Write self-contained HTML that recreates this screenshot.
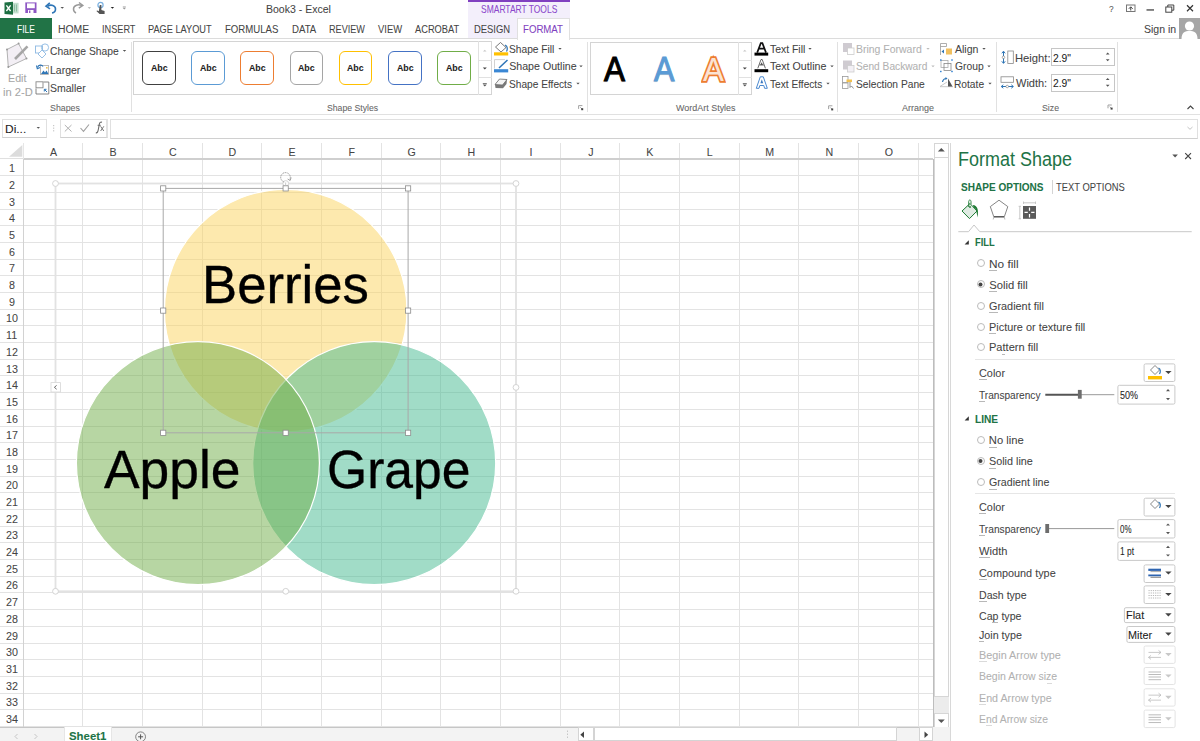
<!DOCTYPE html>
<html><head><meta charset="utf-8"><style>
html,body{margin:0;padding:0;}
body{width:1200px;height:741px;position:relative;overflow:hidden;background:#fff;font-family:"Liberation Sans",sans-serif;}
.t{position:absolute;white-space:nowrap;line-height:normal;transform-origin:0 0;-webkit-text-stroke:0.06px currentColor;}
svg{overflow:visible}
</style></head><body>
<div class="t" style="left:265.86px;top:3.39px;font-size:10.93px;color:#444444;transform:scaleX(0.962);">Book3 - Excel</div>
<div class="t" style="left:1109.47px;top:3.08px;font-size:9.62px;color:#555;transform:scaleX(0.866);">?</div>
<div style="position:absolute;left:468px;top:0px;width:102px;height:38px;background:#f3effb"></div>
<div style="position:absolute;left:468px;top:0px;width:102px;height:1.6px;background:#8040c0"></div>
<div class="t" style="left:481.02px;top:4.29px;font-size:10.06px;color:#8b48cc;transform:scaleX(0.844);">SMARTART TOOLS</div>
<div style="position:absolute;left:517px;top:18px;width:53px;height:21px;background:#fff;border:1px solid #e0e0e0;border-bottom:none;box-sizing:border-box;height:22px"></div>
<div style="position:absolute;left:0px;top:38px;width:517px;height:1px;background:#dcdcdc"></div>
<div style="position:absolute;left:570px;top:38px;width:630px;height:1px;background:#dcdcdc"></div>
<div style="position:absolute;left:0px;top:18px;width:52px;height:21px;background:#217346"></div>
<div class="t" style="left:16.52px;top:22.73px;font-size:10.79px;color:#fff;transform:scaleX(0.783);">FILE</div>
<div class="t" style="left:58.17px;top:22.73px;font-size:10.79px;color:#444444;transform:scaleX(0.966);">HOME</div>
<div class="t" style="left:101.67px;top:22.73px;font-size:10.79px;color:#444444;transform:scaleX(0.851);">INSERT</div>
<div class="t" style="left:148.26px;top:22.73px;font-size:10.79px;color:#444444;transform:scaleX(0.854);">PAGE LAYOUT</div>
<div class="t" style="left:225.03px;top:22.73px;font-size:10.79px;color:#444444;transform:scaleX(0.891);">FORMULAS</div>
<div class="t" style="left:291.73px;top:22.73px;font-size:10.79px;color:#444444;transform:scaleX(0.895);">DATA</div>
<div class="t" style="left:329.02px;top:22.73px;font-size:10.79px;color:#444444;transform:scaleX(0.844);">REVIEW</div>
<div class="t" style="left:377.95px;top:22.73px;font-size:10.79px;color:#444444;transform:scaleX(0.874);">VIEW</div>
<div class="t" style="left:415.00px;top:22.73px;font-size:10.79px;color:#444444;transform:scaleX(0.861);">ACROBAT</div>
<div class="t" style="left:474.25px;top:22.73px;font-size:10.79px;color:#444444;transform:scaleX(0.874);">DESIGN</div>
<div class="t" style="left:522.93px;top:22.73px;font-size:10.79px;color:#8040c0;transform:scaleX(0.894);">FORMAT</div>
<div class="t" style="left:1143.53px;top:22.86px;font-size:10.64px;color:#444444;transform:scaleX(0.989);">Sign in</div>
<div style="position:absolute;left:1179px;top:18px;width:21px;height:21px;background:#a6a6a6;overflow:hidden"></div>
<div style="position:absolute;left:0px;top:114px;width:1200px;height:1px;background:#e1e1e1"></div>
<div style="position:absolute;left:131px;top:42px;width:1px;height:70px;background:#e1e1e1"></div>
<div style="position:absolute;left:587px;top:42px;width:1px;height:70px;background:#e1e1e1"></div>
<div style="position:absolute;left:837px;top:42px;width:1px;height:70px;background:#e1e1e1"></div>
<div style="position:absolute;left:996px;top:42px;width:1px;height:70px;background:#e1e1e1"></div>
<div style="position:absolute;left:1117px;top:42px;width:1px;height:70px;background:#e1e1e1"></div>
<div class="t" style="left:50.35px;top:102.08px;font-size:9.62px;color:#666;transform:scaleX(0.918);">Shapes</div>
<div class="t" style="left:327.11px;top:102.08px;font-size:9.62px;color:#666;transform:scaleX(0.903);">Shape Styles</div>
<div class="t" style="left:676.46px;top:102.08px;font-size:9.62px;color:#666;transform:scaleX(0.932);">WordArt Styles</div>
<div class="t" style="left:901.70px;top:102.08px;font-size:9.62px;color:#666;transform:scaleX(0.936);">Arrange</div>
<div class="t" style="left:1041.61px;top:102.08px;font-size:9.62px;color:#666;transform:scaleX(0.911);">Size</div>
<div class="t" style="left:8.44px;top:72.49px;font-size:10.50px;color:#a6a6a6;transform:scaleX(1.020);">Edit</div>
<div class="t" style="left:2.77px;top:86.49px;font-size:10.50px;color:#a6a6a6;transform:scaleX(1.063);">in 2-D</div>
<div class="t" style="left:50.24px;top:44.66px;font-size:11.08px;color:#444444;transform:scaleX(0.929);">Change Shape</div>
<div class="t" style="left:49.91px;top:63.76px;font-size:11.08px;color:#444444;transform:scaleX(0.945);">Larger</div>
<div class="t" style="left:50.28px;top:82.46px;font-size:11.08px;color:#444444;transform:scaleX(0.949);">Smaller</div>
<div style="position:absolute;left:133px;top:41px;width:359px;height:54px;border:1px solid #d4d4d4;box-sizing:border-box"></div>
<div style="position:absolute;left:478px;top:41px;width:1px;height:54px;background:#e1e1e1"></div>
<div style="position:absolute;left:478px;top:60px;width:14px;height:1px;background:#e1e1e1"></div>
<div style="position:absolute;left:478px;top:77px;width:14px;height:1px;background:#e1e1e1"></div>
<div style="position:absolute;left:142.0px;top:51.3px;width:33.5px;height:33.5px;border:1.5px solid #404040;border-radius:6px;box-sizing:border-box"></div>
<div class="t" style="left:150.58px;top:61.82px;font-size:9.48px;color:#222;font-weight:bold;transform:scaleX(0.932);">Abc</div>
<div style="position:absolute;left:191.2px;top:51.3px;width:33.5px;height:33.5px;border:1.5px solid #5b9bd5;border-radius:6px;box-sizing:border-box"></div>
<div class="t" style="left:199.78px;top:61.82px;font-size:9.48px;color:#222;font-weight:bold;transform:scaleX(0.932);">Abc</div>
<div style="position:absolute;left:240.4px;top:51.3px;width:33.5px;height:33.5px;border:1.5px solid #ed7d31;border-radius:6px;box-sizing:border-box"></div>
<div class="t" style="left:248.98px;top:61.82px;font-size:9.48px;color:#222;font-weight:bold;transform:scaleX(0.932);">Abc</div>
<div style="position:absolute;left:289.6px;top:51.3px;width:33.5px;height:33.5px;border:1.5px solid #a5a5a5;border-radius:6px;box-sizing:border-box"></div>
<div class="t" style="left:298.18px;top:61.82px;font-size:9.48px;color:#222;font-weight:bold;transform:scaleX(0.932);">Abc</div>
<div style="position:absolute;left:338.8px;top:51.3px;width:33.5px;height:33.5px;border:1.5px solid #ffc000;border-radius:6px;box-sizing:border-box"></div>
<div class="t" style="left:347.38px;top:61.82px;font-size:9.48px;color:#222;font-weight:bold;transform:scaleX(0.932);">Abc</div>
<div style="position:absolute;left:388.0px;top:51.3px;width:33.5px;height:33.5px;border:1.5px solid #4472c4;border-radius:6px;box-sizing:border-box"></div>
<div class="t" style="left:396.58px;top:61.82px;font-size:9.48px;color:#222;font-weight:bold;transform:scaleX(0.932);">Abc</div>
<div style="position:absolute;left:437.2px;top:51.3px;width:33.5px;height:33.5px;border:1.5px solid #70ad47;border-radius:6px;box-sizing:border-box"></div>
<div class="t" style="left:445.78px;top:61.82px;font-size:9.48px;color:#222;font-weight:bold;transform:scaleX(0.932);">Abc</div>
<div class="t" style="left:509.24px;top:43.16px;font-size:10.64px;color:#444444;transform:scaleX(0.960);">Shape Fill</div>
<div class="t" style="left:509.22px;top:60.36px;font-size:10.64px;color:#444444;">Shape Outline</div>
<div class="t" style="left:509.24px;top:77.86px;font-size:10.64px;color:#444444;transform:scaleX(0.955);">Shape Effects</div>
<div style="position:absolute;left:590px;top:41.5px;width:162px;height:53px;border:1px solid #d4d4d4;box-sizing:border-box"></div>
<div style="position:absolute;left:738px;top:41.5px;width:1px;height:53px;background:#e1e1e1"></div>
<div style="position:absolute;left:738px;top:60px;width:14px;height:1px;background:#e1e1e1"></div>
<div style="position:absolute;left:738px;top:77px;width:14px;height:1px;background:#e1e1e1"></div>
<div class="t" style="left:603.80px;top:49.77px;font-size:34.69px;color:#000;transform:scaleX(0.906);-webkit-text-stroke:1.1px #000;text-shadow:0 1px 1px rgba(0,0,0,0.25)">A</div>
<div class="t" style="left:654.00px;top:49.77px;font-size:34.69px;color:#5b9bd5;transform:scaleX(0.880);-webkit-text-stroke:1.1px #5b9bd5;text-shadow:0 1px 1px rgba(0,0,0,0.2)">A</div>
<div class="t" style="left:703.00px;top:49.90px;font-size:34.11px;color:#fbe3d3;transform:scaleX(0.917);-webkit-text-stroke:3.6px #ed7d31;paint-order:stroke fill">A</div>
<div class="t" style="left:769.99px;top:43.16px;font-size:10.64px;color:#444444;transform:scaleX(0.980);">Text Fill</div>
<div class="t" style="left:769.99px;top:60.36px;font-size:10.64px;color:#444444;transform:scaleX(1.005);">Text Outline</div>
<div class="t" style="left:770.00px;top:77.86px;font-size:10.64px;color:#444444;transform:scaleX(0.955);">Text Effects</div>
<div class="t" style="left:855.86px;top:43.16px;font-size:10.64px;color:#b1b1b1;transform:scaleX(0.985);">Bring Forward</div>
<div class="t" style="left:856.24px;top:60.36px;font-size:10.64px;color:#b1b1b1;transform:scaleX(0.958);">Send Backward</div>
<div class="t" style="left:856.24px;top:77.86px;font-size:10.64px;color:#444444;transform:scaleX(0.962);">Selection Pane</div>
<div class="t" style="left:955.20px;top:43.16px;font-size:10.64px;color:#444444;transform:scaleX(0.992);">Align</div>
<div class="t" style="left:954.68px;top:60.36px;font-size:10.64px;color:#444444;transform:scaleX(0.971);">Group</div>
<div class="t" style="left:954.38px;top:77.86px;font-size:10.64px;color:#444444;transform:scaleX(0.960);">Rotate</div>
<div class="t" style="left:1015.00px;top:51.86px;font-size:11.08px;color:#444444;transform:scaleX(1.013);">Height:</div>
<div class="t" style="left:1015.84px;top:76.66px;font-size:11.08px;color:#444444;transform:scaleX(0.993);">Width:</div>
<div style="position:absolute;left:1051px;top:48px;width:64px;height:18px;border:1px solid #c6c6c6;box-sizing:border-box;background:#fff"></div>
<div style="position:absolute;left:1051px;top:73.5px;width:64px;height:18px;border:1px solid #c6c6c6;box-sizing:border-box;background:#fff"></div>
<div class="t" style="left:1052.88px;top:51.86px;font-size:10.64px;color:#222;transform:scaleX(0.971);">2.9"</div>
<div class="t" style="left:1052.88px;top:77.36px;font-size:10.64px;color:#222;transform:scaleX(0.971);">2.9"</div>
<div style="position:absolute;left:2px;top:119px;width:45px;height:19px;border:1px solid #e0e0e0;border-bottom-color:#d0d0d0;box-sizing:border-box"></div>
<div class="t" style="left:4.84px;top:122.59px;font-size:10.93px;color:#222;transform:scaleX(1.094);">Di...</div>
<div style="position:absolute;left:60px;top:119px;width:48px;height:19px;border:1px solid #e0e0e0;border-bottom-color:#d0d0d0;border-right:2px solid #e3e3e3;box-sizing:border-box"></div>
<div style="position:absolute;left:110px;top:119px;width:1088px;height:19.5px;border:1px solid #e0e0e0;border-bottom-color:#d0d0d0;box-sizing:border-box"></div>
<div style="position:absolute;left:23px;top:175.19px;width:910px;height:1px;background:#e3e3e3"></div>
<div style="position:absolute;left:0px;top:175.19px;width:23px;height:1px;background:#e3e3e3"></div>
<div style="position:absolute;left:23px;top:191.88px;width:910px;height:1px;background:#e3e3e3"></div>
<div style="position:absolute;left:0px;top:191.88px;width:23px;height:1px;background:#e3e3e3"></div>
<div style="position:absolute;left:23px;top:208.57px;width:910px;height:1px;background:#e3e3e3"></div>
<div style="position:absolute;left:0px;top:208.57px;width:23px;height:1px;background:#e3e3e3"></div>
<div style="position:absolute;left:23px;top:225.26px;width:910px;height:1px;background:#e3e3e3"></div>
<div style="position:absolute;left:0px;top:225.26px;width:23px;height:1px;background:#e3e3e3"></div>
<div style="position:absolute;left:23px;top:241.95px;width:910px;height:1px;background:#e3e3e3"></div>
<div style="position:absolute;left:0px;top:241.95px;width:23px;height:1px;background:#e3e3e3"></div>
<div style="position:absolute;left:23px;top:258.64px;width:910px;height:1px;background:#e3e3e3"></div>
<div style="position:absolute;left:0px;top:258.64px;width:23px;height:1px;background:#e3e3e3"></div>
<div style="position:absolute;left:23px;top:275.33px;width:910px;height:1px;background:#e3e3e3"></div>
<div style="position:absolute;left:0px;top:275.33px;width:23px;height:1px;background:#e3e3e3"></div>
<div style="position:absolute;left:23px;top:292.02px;width:910px;height:1px;background:#e3e3e3"></div>
<div style="position:absolute;left:0px;top:292.02px;width:23px;height:1px;background:#e3e3e3"></div>
<div style="position:absolute;left:23px;top:308.71px;width:910px;height:1px;background:#e3e3e3"></div>
<div style="position:absolute;left:0px;top:308.71px;width:23px;height:1px;background:#e3e3e3"></div>
<div style="position:absolute;left:23px;top:325.4px;width:910px;height:1px;background:#e3e3e3"></div>
<div style="position:absolute;left:0px;top:325.4px;width:23px;height:1px;background:#e3e3e3"></div>
<div style="position:absolute;left:23px;top:342.09px;width:910px;height:1px;background:#e3e3e3"></div>
<div style="position:absolute;left:0px;top:342.09px;width:23px;height:1px;background:#e3e3e3"></div>
<div style="position:absolute;left:23px;top:358.78px;width:910px;height:1px;background:#e3e3e3"></div>
<div style="position:absolute;left:0px;top:358.78px;width:23px;height:1px;background:#e3e3e3"></div>
<div style="position:absolute;left:23px;top:375.47px;width:910px;height:1px;background:#e3e3e3"></div>
<div style="position:absolute;left:0px;top:375.47px;width:23px;height:1px;background:#e3e3e3"></div>
<div style="position:absolute;left:23px;top:392.16px;width:910px;height:1px;background:#e3e3e3"></div>
<div style="position:absolute;left:0px;top:392.16px;width:23px;height:1px;background:#e3e3e3"></div>
<div style="position:absolute;left:23px;top:408.85px;width:910px;height:1px;background:#e3e3e3"></div>
<div style="position:absolute;left:0px;top:408.85px;width:23px;height:1px;background:#e3e3e3"></div>
<div style="position:absolute;left:23px;top:425.54px;width:910px;height:1px;background:#e3e3e3"></div>
<div style="position:absolute;left:0px;top:425.54px;width:23px;height:1px;background:#e3e3e3"></div>
<div style="position:absolute;left:23px;top:442.23px;width:910px;height:1px;background:#e3e3e3"></div>
<div style="position:absolute;left:0px;top:442.23px;width:23px;height:1px;background:#e3e3e3"></div>
<div style="position:absolute;left:23px;top:458.92px;width:910px;height:1px;background:#e3e3e3"></div>
<div style="position:absolute;left:0px;top:458.92px;width:23px;height:1px;background:#e3e3e3"></div>
<div style="position:absolute;left:23px;top:475.61px;width:910px;height:1px;background:#e3e3e3"></div>
<div style="position:absolute;left:0px;top:475.61px;width:23px;height:1px;background:#e3e3e3"></div>
<div style="position:absolute;left:23px;top:492.3px;width:910px;height:1px;background:#e3e3e3"></div>
<div style="position:absolute;left:0px;top:492.3px;width:23px;height:1px;background:#e3e3e3"></div>
<div style="position:absolute;left:23px;top:508.99px;width:910px;height:1px;background:#e3e3e3"></div>
<div style="position:absolute;left:0px;top:508.99px;width:23px;height:1px;background:#e3e3e3"></div>
<div style="position:absolute;left:23px;top:525.68px;width:910px;height:1px;background:#e3e3e3"></div>
<div style="position:absolute;left:0px;top:525.68px;width:23px;height:1px;background:#e3e3e3"></div>
<div style="position:absolute;left:23px;top:542.37px;width:910px;height:1px;background:#e3e3e3"></div>
<div style="position:absolute;left:0px;top:542.37px;width:23px;height:1px;background:#e3e3e3"></div>
<div style="position:absolute;left:23px;top:559.06px;width:910px;height:1px;background:#e3e3e3"></div>
<div style="position:absolute;left:0px;top:559.06px;width:23px;height:1px;background:#e3e3e3"></div>
<div style="position:absolute;left:23px;top:575.75px;width:910px;height:1px;background:#e3e3e3"></div>
<div style="position:absolute;left:0px;top:575.75px;width:23px;height:1px;background:#e3e3e3"></div>
<div style="position:absolute;left:23px;top:592.44px;width:910px;height:1px;background:#e3e3e3"></div>
<div style="position:absolute;left:0px;top:592.44px;width:23px;height:1px;background:#e3e3e3"></div>
<div style="position:absolute;left:23px;top:609.13px;width:910px;height:1px;background:#e3e3e3"></div>
<div style="position:absolute;left:0px;top:609.13px;width:23px;height:1px;background:#e3e3e3"></div>
<div style="position:absolute;left:23px;top:625.82px;width:910px;height:1px;background:#e3e3e3"></div>
<div style="position:absolute;left:0px;top:625.82px;width:23px;height:1px;background:#e3e3e3"></div>
<div style="position:absolute;left:23px;top:642.51px;width:910px;height:1px;background:#e3e3e3"></div>
<div style="position:absolute;left:0px;top:642.51px;width:23px;height:1px;background:#e3e3e3"></div>
<div style="position:absolute;left:23px;top:659.2px;width:910px;height:1px;background:#e3e3e3"></div>
<div style="position:absolute;left:0px;top:659.2px;width:23px;height:1px;background:#e3e3e3"></div>
<div style="position:absolute;left:23px;top:675.89px;width:910px;height:1px;background:#e3e3e3"></div>
<div style="position:absolute;left:0px;top:675.89px;width:23px;height:1px;background:#e3e3e3"></div>
<div style="position:absolute;left:23px;top:692.58px;width:910px;height:1px;background:#e3e3e3"></div>
<div style="position:absolute;left:0px;top:692.58px;width:23px;height:1px;background:#e3e3e3"></div>
<div style="position:absolute;left:23px;top:709.27px;width:910px;height:1px;background:#e3e3e3"></div>
<div style="position:absolute;left:0px;top:709.27px;width:23px;height:1px;background:#e3e3e3"></div>
<div style="position:absolute;left:23px;top:725.96px;width:910px;height:1px;background:#e3e3e3"></div>
<div style="position:absolute;left:0px;top:725.96px;width:23px;height:1px;background:#e3e3e3"></div>
<div style="position:absolute;left:82.17px;top:143px;width:1px;height:584px;background:#e3e3e3"></div>
<div style="position:absolute;left:141.84px;top:143px;width:1px;height:584px;background:#e3e3e3"></div>
<div style="position:absolute;left:201.51px;top:143px;width:1px;height:584px;background:#e3e3e3"></div>
<div style="position:absolute;left:261.18px;top:143px;width:1px;height:584px;background:#e3e3e3"></div>
<div style="position:absolute;left:320.85px;top:143px;width:1px;height:584px;background:#e3e3e3"></div>
<div style="position:absolute;left:380.52px;top:143px;width:1px;height:584px;background:#e3e3e3"></div>
<div style="position:absolute;left:440.19px;top:143px;width:1px;height:584px;background:#e3e3e3"></div>
<div style="position:absolute;left:499.86px;top:143px;width:1px;height:584px;background:#e3e3e3"></div>
<div style="position:absolute;left:559.53px;top:143px;width:1px;height:584px;background:#e3e3e3"></div>
<div style="position:absolute;left:619.2px;top:143px;width:1px;height:584px;background:#e3e3e3"></div>
<div style="position:absolute;left:678.87px;top:143px;width:1px;height:584px;background:#e3e3e3"></div>
<div style="position:absolute;left:738.54px;top:143px;width:1px;height:584px;background:#e3e3e3"></div>
<div style="position:absolute;left:798.21px;top:143px;width:1px;height:584px;background:#e3e3e3"></div>
<div style="position:absolute;left:857.88px;top:143px;width:1px;height:584px;background:#e3e3e3"></div>
<div style="position:absolute;left:917.55px;top:143px;width:1px;height:584px;background:#e3e3e3"></div>
<div style="position:absolute;left:23px;top:158.4px;width:910px;height:1.3px;background:#cfcfcf"></div>
<div style="position:absolute;left:0px;top:158.2px;width:23px;height:1px;background:#e0e0e0"></div>
<div style="position:absolute;left:22.5px;top:159px;width:1px;height:568px;background:#d2d2d2"></div>
<div style="position:absolute;left:22.5px;top:143px;width:1px;height:16px;background:#e6e6e6"></div>
<div class="t" style="left:50.00px;top:145.66px;font-size:10.64px;color:#444444;">A</div>
<div class="t" style="left:109.51px;top:145.66px;font-size:10.64px;color:#444444;">B</div>
<div class="t" style="left:168.96px;top:145.66px;font-size:10.64px;color:#444444;">C</div>
<div class="t" style="left:228.53px;top:145.66px;font-size:10.64px;color:#444444;">D</div>
<div class="t" style="left:288.46px;top:145.66px;font-size:10.64px;color:#444444;">E</div>
<div class="t" style="left:348.43px;top:145.66px;font-size:10.64px;color:#444444;">F</div>
<div class="t" style="left:407.54px;top:145.66px;font-size:10.64px;color:#444444;">G</div>
<div class="t" style="left:467.39px;top:145.66px;font-size:10.64px;color:#444444;">H</div>
<div class="t" style="left:529.43px;top:145.66px;font-size:10.64px;color:#444444;">I</div>
<div class="t" style="left:588.22px;top:145.66px;font-size:10.64px;color:#444444;">J</div>
<div class="t" style="left:646.32px;top:145.66px;font-size:10.64px;color:#444444;">K</div>
<div class="t" style="left:706.69px;top:145.66px;font-size:10.64px;color:#444444;">L</div>
<div class="t" style="left:765.16px;top:145.66px;font-size:10.64px;color:#444444;">M</div>
<div class="t" style="left:825.41px;top:145.66px;font-size:10.64px;color:#444444;">N</div>
<div class="t" style="left:884.79px;top:145.66px;font-size:10.64px;color:#444444;">O</div>
<div class="t" style="left:8.66px;top:161.23px;font-size:11.66px;color:#444444;transform:scaleX(0.920);">1</div>
<div class="t" style="left:8.82px;top:177.92px;font-size:11.66px;color:#444444;transform:scaleX(0.920);">2</div>
<div class="t" style="left:8.82px;top:194.61px;font-size:11.66px;color:#444444;transform:scaleX(0.920);">3</div>
<div class="t" style="left:8.88px;top:211.30px;font-size:11.66px;color:#444444;transform:scaleX(0.920);">4</div>
<div class="t" style="left:8.82px;top:227.99px;font-size:11.66px;color:#444444;transform:scaleX(0.920);">5</div>
<div class="t" style="left:8.77px;top:244.68px;font-size:11.66px;color:#444444;transform:scaleX(0.920);">6</div>
<div class="t" style="left:8.82px;top:261.37px;font-size:11.66px;color:#444444;transform:scaleX(0.920);">7</div>
<div class="t" style="left:8.80px;top:278.06px;font-size:11.66px;color:#444444;transform:scaleX(0.920);">8</div>
<div class="t" style="left:8.82px;top:294.75px;font-size:11.66px;color:#444444;transform:scaleX(0.920);">9</div>
<div class="t" style="left:5.63px;top:311.44px;font-size:11.66px;color:#444444;transform:scaleX(0.920);">10</div>
<div class="t" style="left:6.09px;top:328.13px;font-size:11.66px;color:#444444;transform:scaleX(0.920);">11</div>
<div class="t" style="left:5.71px;top:344.82px;font-size:11.66px;color:#444444;transform:scaleX(0.920);">12</div>
<div class="t" style="left:5.66px;top:361.51px;font-size:11.66px;color:#444444;transform:scaleX(0.920);">13</div>
<div class="t" style="left:5.60px;top:378.20px;font-size:11.66px;color:#444444;transform:scaleX(0.920);">14</div>
<div class="t" style="left:5.66px;top:394.89px;font-size:11.66px;color:#444444;transform:scaleX(0.920);">15</div>
<div class="t" style="left:5.66px;top:411.58px;font-size:11.66px;color:#444444;transform:scaleX(0.920);">16</div>
<div class="t" style="left:5.71px;top:428.27px;font-size:11.66px;color:#444444;transform:scaleX(0.920);">17</div>
<div class="t" style="left:5.66px;top:444.96px;font-size:11.66px;color:#444444;transform:scaleX(0.920);">18</div>
<div class="t" style="left:5.68px;top:461.65px;font-size:11.66px;color:#444444;transform:scaleX(0.920);">19</div>
<div class="t" style="left:5.77px;top:478.34px;font-size:11.66px;color:#444444;transform:scaleX(0.920);">20</div>
<div class="t" style="left:5.82px;top:495.03px;font-size:11.66px;color:#444444;transform:scaleX(0.920);">21</div>
<div class="t" style="left:5.85px;top:511.72px;font-size:11.66px;color:#444444;transform:scaleX(0.920);">22</div>
<div class="t" style="left:5.79px;top:528.41px;font-size:11.66px;color:#444444;transform:scaleX(0.920);">23</div>
<div class="t" style="left:5.74px;top:545.10px;font-size:11.66px;color:#444444;transform:scaleX(0.920);">24</div>
<div class="t" style="left:5.79px;top:561.79px;font-size:11.66px;color:#444444;transform:scaleX(0.920);">25</div>
<div class="t" style="left:5.79px;top:578.48px;font-size:11.66px;color:#444444;transform:scaleX(0.920);">26</div>
<div class="t" style="left:5.85px;top:595.17px;font-size:11.66px;color:#444444;transform:scaleX(0.920);">27</div>
<div class="t" style="left:5.79px;top:611.86px;font-size:11.66px;color:#444444;transform:scaleX(0.920);">28</div>
<div class="t" style="left:5.82px;top:628.55px;font-size:11.66px;color:#444444;transform:scaleX(0.920);">29</div>
<div class="t" style="left:5.82px;top:645.24px;font-size:11.66px;color:#444444;transform:scaleX(0.920);">30</div>
<div class="t" style="left:5.87px;top:661.93px;font-size:11.66px;color:#444444;transform:scaleX(0.920);">31</div>
<div class="t" style="left:5.90px;top:678.62px;font-size:11.66px;color:#444444;transform:scaleX(0.920);">32</div>
<div class="t" style="left:5.85px;top:695.31px;font-size:11.66px;color:#444444;transform:scaleX(0.920);">33</div>
<div class="t" style="left:5.79px;top:712.00px;font-size:11.66px;color:#444444;transform:scaleX(0.920);">34</div>
<div style="position:absolute;left:932.6px;top:159px;width:1px;height:568px;background:#bdbdbd"></div>
<div style="position:absolute;left:934px;top:157px;width:15px;height:556px;background:#fff"></div>
<div style="position:absolute;left:934px;top:697px;width:15px;height:16px;background:#ececec"></div>
<div style="position:absolute;left:934px;top:143px;width:15px;height:15px;background:#fff;border:1px solid #d6d6d6;box-sizing:border-box"></div>
<div style="position:absolute;left:934px;top:157px;width:15px;height:540px;background:#fff;border:1px solid #d6d6d6;box-sizing:border-box"></div>
<div style="position:absolute;left:934px;top:713px;width:15px;height:14.5px;background:#fff;border:1px solid #d6d6d6;box-sizing:border-box"></div>
<svg style="position:absolute;left:934px;top:143px" width="15" height="585" viewBox="0 0 15 585"><path d="M3.8 8.5 h7 l-3.5 -3.6z" fill="#555"/><path d="M3.8 576.5 h7 l-3.5 3.6z" fill="#555"/></svg>
<div style="position:absolute;left:950px;top:143px;width:1px;height:598px;background:#d8d8d8"></div>
<div style="position:absolute;left:0px;top:727px;width:950px;height:14px;background:#f3f3f3"></div>
<div style="position:absolute;left:0px;top:726.5px;width:933px;height:1px;background:#c6c6c6"></div>
<div style="position:absolute;left:64px;top:727px;width:48px;height:14px;background:#fff;border-left:1px solid #e6e6e6;border-right:1px solid #e6e6e6;box-sizing:border-box"></div>
<div class="t" style="left:68.66px;top:729.13px;font-size:11.66px;color:#217346;font-weight:bold;transform:scaleX(0.978);">Sheet1</div>
<div style="position:absolute;left:578px;top:727px;width:16px;height:14px;background:#fff;border:1px solid #d4d4d4;box-sizing:border-box"></div>
<div style="position:absolute;left:594px;top:727px;width:303px;height:14px;background:#fff;border:1px solid #d4d4d4;box-sizing:border-box"></div>
<div style="position:absolute;left:919px;top:727px;width:14px;height:14px;background:#fff;border:1px solid #d4d4d4;box-sizing:border-box"></div>
<svg style="position:absolute;left:0px;top:0px" width="1200" height="741" viewBox="0 0 1200 741">
<circle cx="285.7" cy="310.6" r="121.3" fill="rgba(251,211,93,0.5)" stroke="#fff" stroke-width="1.2"/>
<circle cx="374.2" cy="463.2" r="121.5" fill="rgba(67,185,143,0.5)" stroke="#fff" stroke-width="1.2"/>
<circle cx="197.9" cy="463.1" r="121.5" fill="rgba(111,173,71,0.5)" stroke="#fff" stroke-width="1.2"/>
</svg>
<div class="t" style="left:202.04px;top:253.79px;font-size:53.21px;color:#000;transform:scaleX(0.990);-webkit-text-stroke:0.35px #000">Berries</div>
<div class="t" style="left:103.50px;top:437.80px;font-size:54.08px;color:#000;transform:scaleX(0.987);-webkit-text-stroke:0.35px #000">Apple</div>
<div class="t" style="left:327.42px;top:438.17px;font-size:53.79px;color:#000;transform:scaleX(0.960);-webkit-text-stroke:0.35px #000">Grape</div>
<div class="t" style="left:957.96px;top:148.47px;font-size:20.12px;color:#217346;transform:scaleX(0.895);-webkit-text-stroke:0">Format Shape</div>
<div class="t" style="left:960.50px;top:180.83px;font-size:11.22px;color:#217346;font-weight:bold;transform:scaleX(0.895);">SHAPE OPTIONS</div>
<div style="position:absolute;left:1052px;top:180px;width:1px;height:14px;background:#d4d4d4"></div>
<div class="t" style="left:1055.61px;top:180.83px;font-size:11.22px;color:#444444;transform:scaleX(0.838);">TEXT OPTIONS</div>
<div class="t" style="left:974.79px;top:237.32px;font-size:10.35px;color:#217346;font-weight:bold;transform:scaleX(0.901);">FILL</div>
<div class="t" style="left:974.64px;top:413.62px;font-size:10.35px;color:#217346;font-weight:bold;transform:scaleX(0.982);">LINE</div>
<div class="t" style="left:988.75px;top:257.63px;font-size:11.22px;color:#444444;transform:scaleX(1.055);">No fill</div>
<div style="position:absolute;left:988.75px;top:270.00px;width:8.56px;height:1px;background:#b8b8b8"></div>
<div style="position:absolute;left:976.5px;top:259.4px;width:8px;height:8px;border:1px solid #bbb;border-radius:50%;box-sizing:border-box;background:#fff"></div>
<div class="t" style="left:989.20px;top:278.63px;font-size:11.22px;color:#444444;">Solid fill</div>
<div style="position:absolute;left:989.20px;top:291.00px;width:7.46px;height:1px;background:#b8b8b8"></div>
<div style="position:absolute;left:976.5px;top:280.4px;width:8px;height:8px;border:1px solid #bbb;border-radius:50%;box-sizing:border-box;background:#fff"></div>
<div class="t" style="left:989.16px;top:299.93px;font-size:11.22px;color:#444444;transform:scaleX(0.968);">Gradient fill</div>
<div style="position:absolute;left:989.16px;top:312.30px;width:8.46px;height:1px;background:#b8b8b8"></div>
<div style="position:absolute;left:976.5px;top:301.7px;width:8px;height:8px;border:1px solid #bbb;border-radius:50%;box-sizing:border-box;background:#fff"></div>
<div class="t" style="left:988.83px;top:320.73px;font-size:11.22px;color:#444444;transform:scaleX(0.971);">Picture or texture fill</div>
<div style="position:absolute;left:988.83px;top:333.10px;width:7.27px;height:1px;background:#b8b8b8"></div>
<div style="position:absolute;left:976.5px;top:322.5px;width:8px;height:8px;border:1px solid #bbb;border-radius:50%;box-sizing:border-box;background:#fff"></div>
<div class="t" style="left:988.82px;top:341.43px;font-size:11.22px;color:#444444;transform:scaleX(0.984);">Pattern fill</div>
<div style="position:absolute;left:1002.33px;top:353.80px;width:3.07px;height:1px;background:#b8b8b8"></div>
<div style="position:absolute;left:976.5px;top:343.2px;width:8px;height:8px;border:1px solid #bbb;border-radius:50%;box-sizing:border-box;background:#fff"></div>
<div style="position:absolute;left:975px;top:359px;width:200px;height:1px;background:#e6e6e6"></div>
<div class="t" style="left:988.80px;top:434.23px;font-size:11.22px;color:#444444;">No line</div>
<div style="position:absolute;left:988.80px;top:446.60px;width:8.13px;height:1px;background:#b8b8b8"></div>
<div style="position:absolute;left:976.5px;top:436px;width:8px;height:8px;border:1px solid #bbb;border-radius:50%;box-sizing:border-box;background:#fff"></div>
<div class="t" style="left:989.21px;top:455.23px;font-size:11.22px;color:#444444;transform:scaleX(0.962);">Solid line</div>
<div style="position:absolute;left:989.21px;top:467.60px;width:7.20px;height:1px;background:#b8b8b8"></div>
<div style="position:absolute;left:976.5px;top:457px;width:8px;height:8px;border:1px solid #bbb;border-radius:50%;box-sizing:border-box;background:#fff"></div>
<div class="t" style="left:989.17px;top:476.33px;font-size:11.22px;color:#444444;transform:scaleX(0.949);">Gradient line</div>
<div style="position:absolute;left:989.17px;top:488.70px;width:8.29px;height:1px;background:#b8b8b8"></div>
<div style="position:absolute;left:976.5px;top:478.1px;width:8px;height:8px;border:1px solid #bbb;border-radius:50%;box-sizing:border-box;background:#fff"></div>
<div style="position:absolute;left:975px;top:493px;width:200px;height:1px;background:#e6e6e6"></div>
<div class="t" style="left:978.65px;top:366.83px;font-size:11.22px;color:#444444;transform:scaleX(0.972);">Color</div>
<div style="position:absolute;left:978.65px;top:379.20px;width:7.88px;height:1px;background:#b8b8b8"></div>
<div class="t" style="left:979.00px;top:388.53px;font-size:11.22px;color:#444444;transform:scaleX(0.902);">Transparency</div>
<div style="position:absolute;left:979.00px;top:400.90px;width:6.18px;height:1px;background:#b8b8b8"></div>
<div class="t" style="left:978.66px;top:500.93px;font-size:11.22px;color:#444444;transform:scaleX(0.968);">Color</div>
<div style="position:absolute;left:978.66px;top:513.30px;width:7.84px;height:1px;background:#b8b8b8"></div>
<div class="t" style="left:979.00px;top:522.93px;font-size:11.22px;color:#444444;transform:scaleX(0.908);">Transparency</div>
<div style="position:absolute;left:979.00px;top:535.30px;width:6.22px;height:1px;background:#b8b8b8"></div>
<div class="t" style="left:979.14px;top:545.03px;font-size:11.22px;color:#444444;transform:scaleX(0.990);">Width</div>
<div style="position:absolute;left:979.14px;top:557.40px;width:10.48px;height:1px;background:#b8b8b8"></div>
<div class="t" style="left:978.66px;top:567.03px;font-size:11.22px;color:#444444;transform:scaleX(0.968);">Compound type</div>
<div style="position:absolute;left:978.66px;top:579.40px;width:7.85px;height:1px;background:#b8b8b8"></div>
<div class="t" style="left:979.35px;top:589.03px;font-size:11.22px;color:#444444;transform:scaleX(0.943);">Dash type</div>
<div style="position:absolute;left:979.35px;top:601.40px;width:7.64px;height:1px;background:#b8b8b8"></div>
<div class="t" style="left:978.67px;top:609.73px;font-size:11.22px;color:#444444;transform:scaleX(0.945);">Cap type</div>
<div style="position:absolute;left:992.22px;top:622.10px;width:5.90px;height:1px;background:#b8b8b8"></div>
<div class="t" style="left:979.04px;top:628.83px;font-size:11.22px;color:#444444;transform:scaleX(0.954);">Join type</div>
<div style="position:absolute;left:979.04px;top:641.20px;width:5.36px;height:1px;background:#b8b8b8"></div>
<div class="t" style="left:979.33px;top:648.83px;font-size:11.22px;color:#b1b1b1;transform:scaleX(0.965);">Begin Arrow type</div>
<div style="position:absolute;left:979.33px;top:661.20px;width:7.22px;height:1px;background:#dadada"></div>
<div class="t" style="left:979.36px;top:670.13px;font-size:11.22px;color:#b1b1b1;transform:scaleX(0.936);">Begin Arrow size</div>
<div style="position:absolute;left:1046.51px;top:682.50px;width:5.25px;height:1px;background:#dadada"></div>
<div class="t" style="left:979.34px;top:691.53px;font-size:11.22px;color:#b1b1b1;transform:scaleX(0.954);">End Arrow type</div>
<div style="position:absolute;left:979.34px;top:703.90px;width:7.15px;height:1px;background:#dadada"></div>
<div class="t" style="left:979.37px;top:713.03px;font-size:11.22px;color:#b1b1b1;transform:scaleX(0.923);">End Arrow size</div>
<div style="position:absolute;left:986.28px;top:725.40px;width:5.76px;height:1px;background:#dadada"></div>
<svg style="position:absolute;left:0px;top:0px" width="130" height="18" viewBox="0 0 130 18">
<path d="M4.5 2.6 L13 1.8 L13 14.8 L4.5 13.9 Z" fill="#1d6f42"/>
<rect x="13" y="2.8" width="5.6" height="10.6" fill="#c4dfcf"/>
<path d="M14.5 4.5v7M16.5 4.5v7" stroke="#7fb597" stroke-width="0.8"/>
<path d="M6.4 5.4 L10.6 11 M10.6 5.4 L6.4 11" stroke="#fff" stroke-width="1.4"/>
<path d="M25.3 2.4 H36.5 V13 H25.3 Z" fill="#8e57c4"/>
<rect x="27" y="3.4" width="7.8" height="4.8" fill="#fff"/>
<rect x="28" y="10" width="5.5" height="3" fill="#fff"/>
<rect x="29" y="10.5" width="1.4" height="2.5" fill="#8e57c4"/>
<path d="M47.5 6.3 C51 3.8 55.5 5.5 55.5 9 C55.5 11.5 53.5 12.8 52 13" fill="none" stroke="#2e75b6" stroke-width="1.6"/>
<path d="M49.8 2.8 L46 6.2 L50 8.8" fill="none" stroke="#2e75b6" stroke-width="1.6"/>
<path d="M60.5 7 h3.5 l-1.75 1.8z" fill="#555"/>
<path d="M82 5.8 C78.5 3.8 73.5 5.2 73.5 9 C73.5 11 75 12.5 76 13" fill="none" stroke="#999" stroke-width="1.5"/>
<path d="M79 2.5 L82.8 5.5 L78.8 8.2" fill="none" stroke="#999" stroke-width="1.5"/>
<path d="M87.7 7.2 h3.3 l-1.65 1.6z" fill="#aaa"/>
<circle cx="100.5" cy="5" r="2.6" fill="none" stroke="#7ab0e0" stroke-width="1.2"/>
<path d="M99.8 5 h1.6 v5 l3.2 1 v3 h-5 l-3.2 -3 l0.8 -0.6 l1.6 0.8 z" fill="#555"/>
<path d="M110.7 7 h3.4 l-1.7 1.7z" fill="#222"/>
<path d="M122.8 6.6 h3 v0.8 h-3z M122.8 8 h3 l-1.5 1.6z" fill="#999"/>
</svg>
<svg style="position:absolute;left:1100px;top:0px" width="100" height="18" viewBox="0 0 100 18">
<rect x="26.5" y="5" width="8.5" height="6.5" fill="none" stroke="#777" stroke-width="1"/>
<path d="M30.75 10.5 v-3.5 M28.8 8.8 l1.95-2 l1.95 2" fill="none" stroke="#444" stroke-width="1"/>
<rect x="46.5" y="9.3" width="7.5" height="1.3" fill="#444"/>
<rect x="65.8" y="7" width="6" height="5.2" fill="none" stroke="#444" stroke-width="1"/>
<path d="M67.8 7 v-2 h6 v5.2 h-2" fill="none" stroke="#444" stroke-width="1"/>
<path d="M87 5.3 L93 11.2 M93 5.3 L87 11.2" stroke="#333" stroke-width="1.2"/>
</svg>
<svg style="position:absolute;left:1179px;top:18px" width="21" height="21" viewBox="0 0 21 21">
<circle cx="10.5" cy="8" r="4.6" fill="#fff"/>
<path d="M2.5 21 C2.5 14.5 6 13 10.5 13 C15 13 18.5 14.5 18.5 21 Z" fill="#fff"/>
</svg>
<svg style="position:absolute;left:0px;top:0px" width="1200" height="120" viewBox="0 0 1200 120">
<!-- Edit in 2-D -->
<path d="M7 49.5 L18.6 43.6 L26.5 58.5 L8.3 67 Z" fill="#f3eff5" stroke="#aaa" stroke-width="0.9"/>
<circle cx="7" cy="49.5" r="1" fill="#999"/><circle cx="18.6" cy="43.6" r="1" fill="#999"/><circle cx="26.5" cy="58.5" r="1" fill="#999"/><circle cx="8.3" cy="67" r="1" fill="#999"/>
<path d="M15 59 L27.5 46.3" stroke="#a6a6a6" stroke-width="2.6"/>
<!-- Change shape -->
<rect x="35.5" y="46" width="7" height="7" fill="none" stroke="#8db9e2" stroke-width="0.9"/>
<circle cx="45" cy="47.5" r="3.6" fill="none" stroke="#8db9e2" stroke-width="0.9"/>
<path d="M42 50 L46 54 L42 58 L38 54 Z" fill="#fff" stroke="#8db9e2" stroke-width="0.9"/>
<!-- Larger -->
<rect x="40.5" y="65.5" width="8" height="9" fill="#fff" stroke="#aaa" stroke-width="0.8"/>
<path d="M41 74 L43.5 70.5 L45 72.5 L46.5 70.5 L48.5 74 Z" fill="#2e75b6"/>
<rect x="46" y="67" width="1.6" height="1.6" fill="#f2c14e"/>
<path d="M37.5 67.5 C38.5 64.5 42 64.5 43 66.5" fill="none" stroke="#2e75b6" stroke-width="1.1"/>
<path d="M36.5 65.5 L37.3 68.8 L40 67.5" fill="none" stroke="#2e75b6" stroke-width="1.1"/>
<!-- Smaller -->
<rect x="36" y="81.8" width="7" height="6" fill="none" stroke="#888" stroke-width="0.9"/>
<path d="M43.5 82 H48.8 V94 H36 V88.5" fill="none" stroke="#777" stroke-width="0.9"/>
<path d="M47 92 L44.5 89.5 M44.3 91.5 V89.3 H46.5" fill="none" stroke="#2e75b6" stroke-width="1"/>
<!-- Shape Fill -->
<path d="M500.5 42.5 L506 47.5 L501 52 L495.5 47 Z" fill="#fff" stroke="#555" stroke-width="0.8"/>
<path d="M505 45 C508 46 507.5 50 506.5 51.5" fill="none" stroke="#2e75b6" stroke-width="1.3"/>
<rect x="494" y="52.3" width="14.2" height="3.2" fill="#ffc000"/>
<!-- Shape Outline -->
<path d="M494.5 68.5 V59.6 H505" fill="none" stroke="#ccc" stroke-width="0.9"/>
<path d="M499 68 L507.5 60" stroke="#2e75b6" stroke-width="1.5"/>
<rect x="494" y="69.2" width="14.2" height="3.2" fill="#3a87d4"/>
<!-- Shape Effects -->
<path d="M495 84.5 L499.5 79 L507 79.5 L506.5 84 L503 88.3 L495.5 88 Z" fill="#7a7a7a"/>
<path d="M495 84.5 L499.5 79 L507 79.5 L502.5 85 Z" fill="#f4f4f4" stroke="#666" stroke-width="0.7"/>
<!-- Shape gallery scroll arrows -->
<path d="M483 51.5 h3.5 l-1.75 -1.8z" fill="#c8c8c8"/>
<path d="M482.8 67.5 h4 l-2 2z" fill="#444"/>
<path d="M482.8 83 h4 v0.7 h-4z M482.8 84.6 h4 l-2 2z" fill="#555"/>
<path d="M743 51.5 h3.5 l-1.75 -1.8z" fill="#c8c8c8"/>
<path d="M742.8 67.5 h4 l-2 2z" fill="#444"/>
<path d="M742.8 83 h4 v0.7 h-4z M742.8 84.6 h4 l-2 2z" fill="#555"/>
<!-- dropdown arrows -->
<path d="M122.8 50 h3.4 l-1.7 1.8z M558.3 48 h3.4 l-1.7 1.8z M579.3 65.5 h3.4 l-1.7 1.8z M576.3 82.8 h3.4 l-1.7 1.8z" fill="#555"/>
<path d="M808.3 48 h3.4 l-1.7 1.8z M830.3 65.5 h3.4 l-1.7 1.8z M826.3 82.8 h3.4 l-1.7 1.8z" fill="#555"/>
<path d="M926.3 48 h3.4 l-1.7 1.8z M931.3 65.5 h3.4 l-1.7 1.8z" fill="#bbb"/>
<path d="M982.3 48 h3.4 l-1.7 1.8z M987.3 65.5 h3.4 l-1.7 1.8z M988.3 82.8 h3.4 l-1.7 1.8z" fill="#555"/>
<!-- Text Fill -->
<path d="M757.2 52.6 L760.8 43.2 L762.4 43.2 L766 52.6 M758.8 48.6 H764.4" fill="none" stroke="#111" stroke-width="1.7"/>
<rect x="754.5" y="52.6" width="13.7" height="3" fill="#000"/>
<!-- Text Outline -->
<path d="M757.8 68.3 L761 59.5 L762.2 59.5 L765.4 68.3 M759.4 65 H763.8" fill="none" stroke="#444" stroke-width="0.8"/>
<path d="M760.2 65 L761.6 62.3 L763 65 Z" fill="#555"/>
<rect x="754.5" y="69.2" width="13.7" height="3" fill="#000"/>
<!-- Text Effects -->
<path d="M756.3 88.3 L760.3 76.8 L763.3 76.8 L767.3 88.3 L764.6 88.3 L763.8 85.5 L759.8 85.5 L759 88.3 Z" fill="#fff" stroke="#4a89d0" stroke-width="1"/>
<path d="M760.4 83.3 L761.8 79.3 L763.2 83.3 Z" fill="#3a78c0"/>
<!-- Bring forward -->
<rect x="843" y="43" width="9" height="9" fill="#cfcbd1"/>
<rect x="847.5" y="48" width="6.5" height="6.5" fill="#fff" stroke="#ccc" stroke-width="0.8"/>
<rect x="843" y="60.5" width="9" height="9" fill="#cfcbd1"/>
<rect x="847.5" y="65.5" width="6.5" height="6.5" fill="#f3f0f5" stroke="#ccc" stroke-width="0.8"/>
<!-- Selection pane -->
<rect x="842.5" y="76.5" width="5.5" height="6" fill="none" stroke="#999" stroke-width="0.8"/>
<rect x="842.5" y="83" width="5.5" height="5.5" fill="none" stroke="#999" stroke-width="0.8"/>
<rect x="846.5" y="79.5" width="5.5" height="2.6" fill="#f2c14e"/>
<path d="M850 82 L850 87.5 L851.5 86 L853.5 88.5" fill="#fff" stroke="#666" stroke-width="0.7"/>
<!-- Align -->
<path d="M940.5 43.5 V55 M940.5 43.5 H946.5 V46.5 H940.5" fill="none" stroke="#999" stroke-width="0.8"/>
<path d="M941.5 51.5 L944 49.5 V53.5 Z" fill="#2e75b6"/>
<rect x="946" y="48.5" width="6" height="6" fill="#f0c060"/>
<!-- Group -->
<rect x="941" y="60.5" width="7" height="7" fill="none" stroke="#aaa" stroke-width="0.8"/>
<rect x="944" y="63.5" width="7" height="7" fill="none" stroke="#888" stroke-width="0.8"/>
<rect x="940" y="59.3" width="1.6" height="1.4" fill="#3a87d4"/><rect x="951.2" y="59.3" width="1.6" height="1.4" fill="#3a87d4"/>
<rect x="940" y="70.8" width="1.6" height="1.4" fill="#3a87d4"/><rect x="951.2" y="70.8" width="1.6" height="1.4" fill="#3a87d4"/>
<!-- Rotate -->
<path d="M940 86.5 L947 82 M940 86.7 H953" stroke="#bbb" stroke-width="0.8"/>
<path d="M948 86.5 L948 78.5 L952.5 86.5 Z" fill="#555"/>
<path d="M942.5 82 C943 79.5 944.5 78.5 946.5 78.5" fill="none" stroke="#2e75b6" stroke-width="1.2"/>
<path d="M945.5 77 L947.5 78.5 L945.5 80" fill="#2e75b6"/>
<!-- Height icon -->
<path d="M1003.5 51.5 V63 M1001.8 53.3 L1003.5 51.2 L1005.2 53.3 M1001.8 61.3 L1003.5 63.4 L1005.2 61.3" fill="none" stroke="#2e75b6" stroke-width="1"/>
<circle cx="1003.5" cy="57.3" r="1.3" fill="#fff" stroke="#777" stroke-width="0.6"/>
<rect x="1007.8" y="51" width="5.5" height="12.5" fill="none" stroke="#888" stroke-width="0.8"/>
<!-- Width icon -->
<rect x="1001" y="76.8" width="12.5" height="5.5" fill="none" stroke="#888" stroke-width="0.8"/>
<path d="M1001.5 86.5 H1013 M1003.3 84.8 L1001.2 86.5 L1003.3 88.2 M1011.3 84.8 L1013.4 86.5 L1011.3 88.2" fill="none" stroke="#2e75b6" stroke-width="1"/>
<circle cx="1007.2" cy="86.5" r="1.3" fill="#fff" stroke="#777" stroke-width="0.6"/>
<!-- spinners -->
<path d="M1105.8 54.5 h3.8 l-1.9 -2z M1105.8 59.3 h3.8 l-1.9 2z" fill="#555"/>
<path d="M1105.8 80 h3.8 l-1.9 -2z M1105.8 84.8 h3.8 l-1.9 2z" fill="#555"/>
<!-- dialog launchers -->
<path d="M578.6 108.89999999999999 V105.6 H582.4" fill="none" stroke="#999" stroke-width="0.9"/><path d="M580.2 107.19999999999999 L582.2 109.19999999999999" stroke="#777" stroke-width="0.6"/><rect x="581.2" y="108.19999999999999" width="2" height="2" fill="#444"/>
<path d="M828.6 109.1 V105.8 H832.4" fill="none" stroke="#999" stroke-width="0.9"/><path d="M830.2 107.39999999999999 L832.2 109.39999999999999" stroke="#777" stroke-width="0.6"/><rect x="831.2" y="108.39999999999999" width="2" height="2" fill="#444"/>
<path d="M1108 108.3 V105 H1111.8" fill="none" stroke="#999" stroke-width="0.9"/><path d="M1109.6 106.6 L1111.6 108.6" stroke="#777" stroke-width="0.6"/><rect x="1110.6" y="107.6" width="2" height="2" fill="#444"/>
<path d="M1187.5 109 L1190.5 106 L1193.5 109" fill="none" stroke="#444" stroke-width="1.1"/>
</svg>
<svg style="position:absolute;left:0px;top:0px" width="1200" height="741" viewBox="0 0 1200 741"><rect x="55.5" y="183.5" width="460.5" height="407.79999999999995" fill="none" stroke="#e2e2e2" stroke-width="1.8"/><rect x="163.2" y="188.4" width="244.90000000000003" height="244.4" fill="none" stroke="#a9a9a9" stroke-width="1"/><circle cx="55.5" cy="183.5" r="2.9" fill="#fff" stroke="#cfcfcf" stroke-width="0.9"/><circle cx="285.75" cy="183.5" r="2.9" fill="#fff" stroke="#cfcfcf" stroke-width="0.9"/><circle cx="516" cy="183.5" r="2.9" fill="#fff" stroke="#cfcfcf" stroke-width="0.9"/><circle cx="516" cy="387.4" r="2.9" fill="#fff" stroke="#cfcfcf" stroke-width="0.9"/><circle cx="516" cy="591.3" r="2.9" fill="#fff" stroke="#cfcfcf" stroke-width="0.9"/><circle cx="285.75" cy="591.3" r="2.9" fill="#fff" stroke="#cfcfcf" stroke-width="0.9"/><circle cx="55.5" cy="591.3" r="2.9" fill="#fff" stroke="#cfcfcf" stroke-width="0.9"/><rect x="51" y="382.6" width="9.4" height="9.4" fill="#fff" stroke="#d6d6d6" stroke-width="0.8"/><path d="M56.6 385.4 L54.4 387.3 L56.6 389.2" fill="none" stroke="#555" stroke-width="0.9"/><rect x="160.6" y="185.8" width="5.2" height="5.2" fill="#fff" stroke="#8c8c8c" stroke-width="0.8"/><rect x="283.04999999999995" y="185.8" width="5.2" height="5.2" fill="#fff" stroke="#8c8c8c" stroke-width="0.8"/><rect x="405.5" y="185.8" width="5.2" height="5.2" fill="#fff" stroke="#8c8c8c" stroke-width="0.8"/><rect x="405.5" y="308.0" width="5.2" height="5.2" fill="#fff" stroke="#8c8c8c" stroke-width="0.8"/><rect x="405.5" y="430.2" width="5.2" height="5.2" fill="#fff" stroke="#8c8c8c" stroke-width="0.8"/><rect x="283.04999999999995" y="430.2" width="5.2" height="5.2" fill="#fff" stroke="#8c8c8c" stroke-width="0.8"/><rect x="160.6" y="430.2" width="5.2" height="5.2" fill="#fff" stroke="#8c8c8c" stroke-width="0.8"/><rect x="160.6" y="308.0" width="5.2" height="5.2" fill="#fff" stroke="#8c8c8c" stroke-width="0.8"/><path d="M285.65 185.5 V182.5" stroke="#bbb" stroke-width="0.8"/><path d="M284.15 182 A4.8 4.8 0 1 1 289.95 179.2" fill="none" stroke="#999" stroke-width="1" stroke-dasharray="1.2 0.6"/><path d="M291.15 177.5 L290.15 180.5 L287.65 179" fill="none" stroke="#999" stroke-width="0.9"/></svg>
<svg style="position:absolute;left:0px;top:0px" width="1200" height="741" viewBox="0 0 1200 741"><path d="M1172.3 154.6 h5.6 l-2.8 2.8z" fill="#555"/><path d="M1185.2 153.2 L1191 159 M1191 153.2 L1185.2 159" stroke="#444" stroke-width="1.1"/><path d="M962 211 L970 203.5 L977 211 L969.5 218.6 Z" fill="#e0ebe3" stroke="#1e7b34" stroke-width="1"/><path d="M968.7 207 V201.5 C968.7 199.5 971 199.5 971 201.5 V204" fill="none" stroke="#1e7b34" stroke-width="0.9"/><circle cx="970" cy="207" r="0.9" fill="#1e7b34"/><path d="M973 205 C977 205.5 979 209 977.5 217.5 L976.5 212 C976 209 975 208 973.5 207.5 Z" fill="#1e7b34"/><path d="M999 200.2 L1007.8 206.6 L1004.3 216.8 L993.8 216.8 L990.3 206.6 Z" fill="none" stroke="#777" stroke-width="0.9"/><path d="M993.8 216.8 L993.2 219.5 M1004.3 216.8 L1004.9 219.5" stroke="#aaa" stroke-width="0.8"/><path d="M994 216.8 H1004" stroke="#444" stroke-width="1.1"/><rect x="1023" y="206" width="13" height="12.8" fill="#5a5a5a"/><path d="M1029.5 207.5 V210.8 M1029.5 214 V217.5 M1024.5 212.4 H1027.8 M1031.2 212.4 H1034.5" stroke="#fff" stroke-width="1.2"/><path d="M1023.5 202.8 H1035.5 M1023.5 201.5 V204 M1035.5 201.5 V204" stroke="#bbb" stroke-width="0.8"/><path d="M1019.8 206.3 V218.8 M1018.6 206.3 H1021 M1018.6 218.8 H1021" stroke="#bbb" stroke-width="0.8"/><path d="M958.3 231.7 H968.5 L974 225 L979.8 231.7 H1191.7" fill="none" stroke="#c8c8c8" stroke-width="1"/><path d="M968.8 240.3 V244.5 H964.6 Z" fill="#333"/><path d="M968.8 416.3 V420.5 H964.6 Z" fill="#333"/><circle cx="980.5" cy="284.4" r="2" fill="#444"/><circle cx="980.5" cy="461" r="2" fill="#444"/><rect x="1144.1" y="363.9" width="30.800000000000182" height="17.600000000000023" rx="1.5" fill="#fff" stroke="#c9c9c9" stroke-width="1"/><path d="M1155 365.5 L1159.5 370 L1155 374.5 L1150.5 370 Z" fill="#fff" stroke="#555" stroke-width="0.7"/><path d="M1158.5 368 C1161 369 1160.5 372.5 1159.5 374" fill="none" stroke="#2e75b6" stroke-width="1.2"/><rect x="1148" y="376" width="14" height="3.4" fill="#ffc000"/><path d="M1165.2 370.9 h6.4 l-3.2 3.2z" fill="#444"/><rect x="1117.9" y="385.3" width="57.0" height="18.80000000000001" rx="1.5" fill="#fff" stroke="#c9c9c9" stroke-width="1"/><path d="M1166 391.3 h4 l-2 -2.2z M1166 398.1 h4 l-2 2.2z" fill="#555"/><path d="M1045.3 394.7 H1079" stroke="#555" stroke-width="2"/><path d="M1079 394.7 H1114.3" stroke="#999" stroke-width="1"/><rect x="1077.9" y="389.9" width="3.8" height="8.8" fill="#6d6d6d"/><rect x="1144.1" y="498.2" width="30.800000000000182" height="17.80000000000001" rx="1.5" fill="#fff" stroke="#c9c9c9" stroke-width="1"/><path d="M1155 499.5 L1159.5 504 L1155 508.5 L1150.5 504 Z" fill="#fff" stroke="#555" stroke-width="0.7"/><path d="M1158.5 502 C1161 503 1160.5 506.5 1159.5 508" fill="none" stroke="#2e75b6" stroke-width="1.2"/><path d="M1165.2 504.9 h6.4 l-3.2 3.2z" fill="#444"/><rect x="1117.9" y="519.6" width="57.0" height="18.399999999999977" rx="1.5" fill="#fff" stroke="#c9c9c9" stroke-width="1"/><path d="M1166 525.6 h4 l-2 -2.2z M1166 532.0 h4 l-2 2.2z" fill="#555"/><path d="M1049 528.6 H1114.3" stroke="#999" stroke-width="1"/><rect x="1045.3" y="524" width="3.8" height="9" fill="#6d6d6d"/><rect x="1117.9" y="541.9" width="57.0" height="18.5" rx="1.5" fill="#fff" stroke="#c9c9c9" stroke-width="1"/><path d="M1166 547.9 h4 l-2 -2.2z M1166 554.4 h4 l-2 2.2z" fill="#555"/><rect x="1144.1" y="564.9" width="30.800000000000182" height="17.600000000000023" rx="1.5" fill="#fff" stroke="#c9c9c9" stroke-width="1"/><path d="M1165.2 571.4 h6.4 l-3.2 3.2z" fill="#444"/><path d="M1148.3 569.8 H1161" stroke="#2e64b0" stroke-width="2.2"/><path d="M1150.5 571.6 H1161" stroke="#888" stroke-width="0.7"/><path d="M1148.3 575.4 H1161" stroke="#2e64b0" stroke-width="1.8"/><path d="M1150.5 577.3 H1161" stroke="#777" stroke-width="0.9"/><rect x="1144.1" y="585.9" width="30.800000000000182" height="17.600000000000023" rx="1.5" fill="#fff" stroke="#c9c9c9" stroke-width="1"/><path d="M1165.2 592.9 h6.4 l-3.2 3.2z" fill="#444"/><path d="M1148.5 590.6 H1161 M1148.5 593 H1161 M1148.5 595.5 H1161 M1148.5 598 H1161" stroke="#999" stroke-width="0.7" stroke-dasharray="1.2 1"/><rect x="1124.4" y="607.7" width="50.5" height="14.899999999999977" rx="1.5" fill="#fff" stroke="#c9c9c9" stroke-width="1"/><path d="M1165.2 613.1999999999999 h6.4 l-3.2 3.2z" fill="#444"/><rect x="1126.9" y="626.5" width="48.0" height="15.899999999999977" rx="1.5" fill="#fff" stroke="#c9c9c9" stroke-width="1"/><path d="M1165.2 632.6 h6.4 l-3.2 3.2z" fill="#444"/><rect x="1144.1" y="646.0" width="31" height="17.399999999999977" rx="1.5" fill="#fff" stroke="#e3e3e3" stroke-width="1"/><path d="M1165.2 653.1 h6.4 l-3.2 3.2z" fill="#c8c8c8"/><path d="M1148.5 652.4000000000001 H1161 M1158.5 650.4000000000001 L1161 652.4000000000001 L1158.5 654.4000000000001 M1148.5 657.4000000000001 H1161 M1151 655.4000000000001 L1148.5 657.4000000000001 L1151 659.4000000000001" fill="none" stroke="#bbb" stroke-width="0.8"/><rect x="1144.1" y="667.5" width="31" height="17" rx="1.5" fill="#fff" stroke="#e3e3e3" stroke-width="1"/><path d="M1165.2 674.4 h6.4 l-3.2 3.2z" fill="#c8c8c8"/><path d="M1148.5 672.0 H1161 M1148.5 674.5 H1161 M1148.5 677.0 H1161 M1148.5 679.7 H1161" stroke="#bbb" stroke-width="1"/><rect x="1144.1" y="688.8" width="31" height="17.300000000000068" rx="1.5" fill="#fff" stroke="#e3e3e3" stroke-width="1"/><path d="M1165.2 695.85 h6.4 l-3.2 3.2z" fill="#c8c8c8"/><path d="M1148.5 695.1500000000001 H1161 M1158.5 693.1500000000001 L1161 695.1500000000001 L1158.5 697.1500000000001 M1148.5 700.1500000000001 H1161 M1151 698.1500000000001 L1148.5 700.1500000000001 L1151 702.1500000000001" fill="none" stroke="#bbb" stroke-width="0.8"/><rect x="1144.1" y="710.1" width="31" height="17.5" rx="1.5" fill="#fff" stroke="#e3e3e3" stroke-width="1"/><path d="M1165.2 717.25 h6.4 l-3.2 3.2z" fill="#c8c8c8"/><path d="M1148.5 714.85 H1161 M1148.5 717.35 H1161 M1148.5 719.85 H1161 M1148.5 722.5500000000001 H1161" stroke="#bbb" stroke-width="1"/></svg>
<div class="t" style="left:1120.24px;top:388.86px;font-size:10.64px;color:#222;transform:scaleX(0.845);">50%</div>
<div class="t" style="left:1120.28px;top:522.66px;font-size:10.64px;color:#222;transform:scaleX(0.748);">0%</div>
<div class="t" style="left:1119.97px;top:544.96px;font-size:10.64px;color:#222;transform:scaleX(0.794);">1 pt</div>
<div class="t" style="left:1125.93px;top:609.36px;font-size:11.08px;color:#222;transform:scaleX(0.983);">Flat</div>
<div class="t" style="left:1128.13px;top:628.56px;font-size:11.08px;color:#222;transform:scaleX(0.977);">Miter</div>
<svg style="position:absolute;left:0px;top:727px" width="950" height="14" viewBox="0 0 950 14">
<path d="M17.5 7 L15 9.5 L17.5 12" fill="none" stroke="#c0c0c0" stroke-width="0.9"/>
<path d="M34.5 7 L37 9.5 L34.5 12" fill="none" stroke="#c0c0c0" stroke-width="0.9"/>
<circle cx="140.6" cy="9.8" r="4.9" fill="none" stroke="#777" stroke-width="0.9"/>
<path d="M140.6 7.3 V12.3 M138.1 9.8 H143.1" stroke="#555" stroke-width="1"/>
<path d="M567.5 3.5 V5 M567.5 6.5 V8 M567.5 9.5 V11" stroke="#bbb" stroke-width="0.8"/>
<path d="M584 4.5 L580.3 7.8 L584 11 Z" fill="#444"/>
<path d="M924.5 4.5 L928.2 7.8 L924.5 11 Z" fill="#444"/>
</svg>
<svg style="position:absolute;left:0px;top:115px" width="1200" height="45" viewBox="0 0 1200 45">
<path d="M36.6 12 h3.4 l-1.7 1.8z" fill="#555"/>
<path d="M53.7 10 V11.2 M53.7 12.6 V13.8 M53.7 15.2 V16.4" stroke="#aaa" stroke-width="0.8"/>
<path d="M64.8 10 L71.5 16.5 M71.5 10 L64.8 16.5" stroke="#b0b0b0" stroke-width="1"/>
<path d="M80.5 13 L83.5 16.3 L89 9.5" fill="none" stroke="#a0a0a0" stroke-width="1.1"/>
<path d="M1187.5 12 L1190 14.3 L1192.5 12" fill="none" stroke="#bbb" stroke-width="0.9"/>
<path d="M22.3 30 V41.7 H9 Z" fill="#dcdcdc"/>
</svg>
<svg style="position:absolute;left:0px;top:0px" width="1200" height="741" viewBox="0 0 1200 741"><path d="M95.8 132.8 C97.3 133.2 97.9 131.8 98.3 129.5 L99.3 124.3 C99.7 122.4 100.6 121.8 102 122.3" fill="none" stroke="#6a6a6a" stroke-width="1.1"/><path d="M97.6 125.3 H100.8" stroke="#6a6a6a" stroke-width="0.9"/><path d="M100.6 126.3 L103.8 131 M103.8 126.3 L100.6 131" stroke="#6a6a6a" stroke-width="0.9"/></svg>
</body></html>
